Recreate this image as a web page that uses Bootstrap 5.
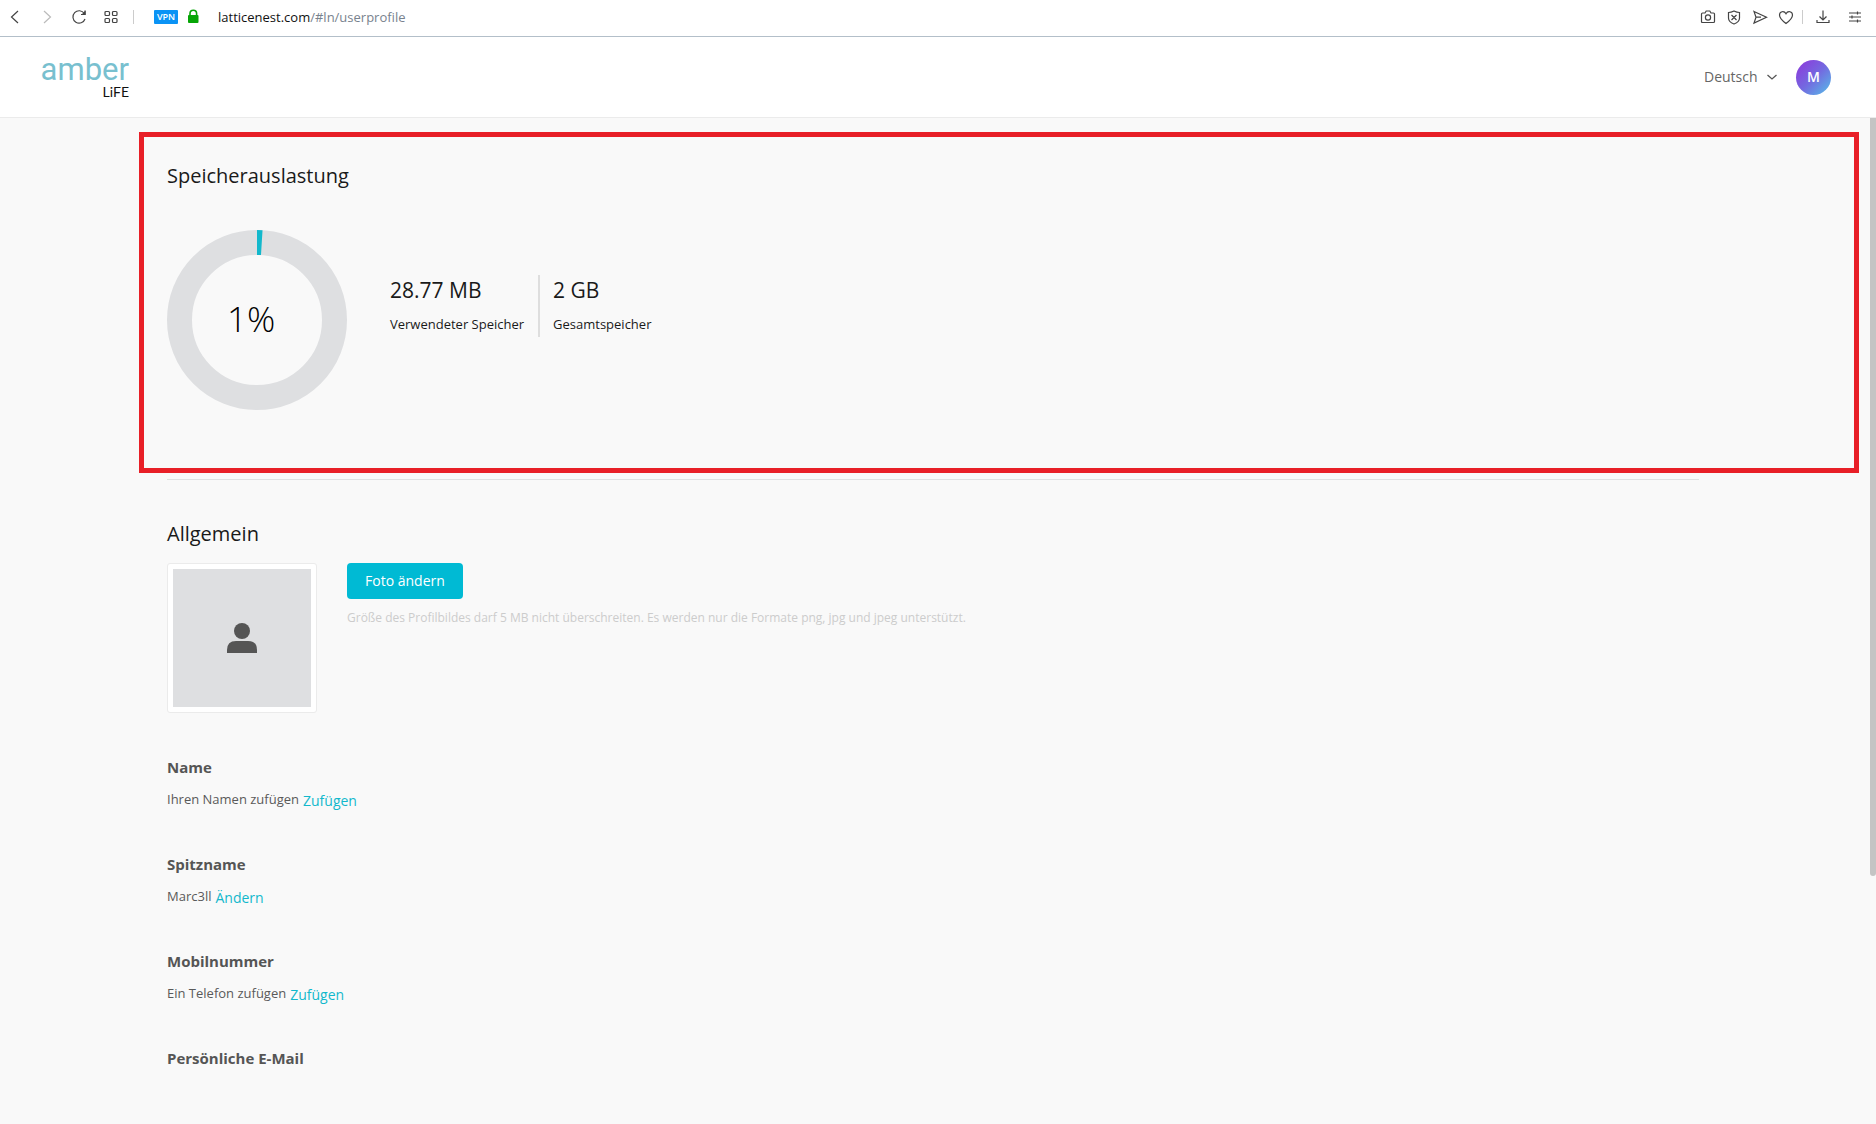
<!DOCTYPE html>
<html lang="de">
<head>
<meta charset="utf-8">
<meta name="viewport" content="width=device-width, initial-scale=1">
<title>amber LiFE – Profil</title>
<link href="https://cdn.jsdelivr.net/npm/bootstrap@5.3.0/dist/css/bootstrap.min.css" rel="stylesheet">
<style>
  body { font-family: "Open Sans", "Noto Sans", sans-serif; font-size: 13px; line-height: 20px; color: #5a5a5a; background: #f9f9f9; }
  .browser-bar { height: 37px; padding: 0 13px 6px 7px; border-bottom: 1px solid #b3bfc9; }
  .tool { border: 0; padding: 0; background: none; color: #444; display: flex; }
  .tool:disabled { color: #bbb; }
  .tool svg { width: 16px; height: 16px; fill: none; stroke: currentColor; stroke-width: 1.2; }
  .nav-tools { gap: 16px; }
  .side-tools { gap: 10px; }
  .bar-rule { width: 1px; height: 14px; background: #ccc; }
  .bar-rule-wide { margin: 0 20px 0 14px; }
  .vpn { background: #0a93f5; color: #fff; font-size: 9px; line-height: 14px; width: 24px; border-radius: 1px; }
  .address { font-size: 13px; color: #78828e; padding-left: 17px; }
  .address span { color: #111; }
  .site-head { height: 81px; padding: 0 45px 0 41px; border-bottom: 1px solid #ebebeb; }
  .brand { width: 88px; padding-top: 2px; color: #78c0cf; }
  .brand-name { font-family: Roboto, sans-serif; font-size: 31px; line-height: 28px; }
  .brand-sub { font-family: Lato, sans-serif; font-size: 14px; line-height: 16px; color: #111; }
  .lang { margin-right: 18px; }
  .lang select { appearance: none; border: 0; padding: 0; background: none; color: #666; font-size: 14px; }
  .user-dot { width: 35px; height: 35px; border: 0; border-radius: 50%; color: #fff; font-size: 14px; font-weight: 600; background: linear-gradient(135deg, #8a3fdc 10%, #7468e0 50%, #55c0e8 100%); }
  .page { padding: 14px 17px 0 139px; }
  .usage { border: 5px solid #e81f27; padding: 24px 23px 58px; color: #1a1a1a; }
  .heading { font-size: 20px; line-height: 30px; font-weight: 400; color: #1a1a1a; margin: 0; }
  .donut { width: 180px; height: 180px; }
  .donut-row { margin-top: 39px; }
  .donut-label { left: 60px; top: 66px; font-size: 35px; line-height: 46px; font-weight: 300; color: #000; }
  .stats { margin: 45px 0 0 43px; height: 62px; }
  .stats > div + div { border-left: 2px solid #dedede; padding-left: 13px; margin-left: 14px; }
  .stat-value { font-size: 21px; line-height: 30px; margin-bottom: 9px; }
  .general { padding: 6px 160px 0 28px; }
  .split { border: 0; border-top: 1px solid #e0e0e0; opacity: 1; margin: 0 0 39px; }
  .photo-frame { width: 150px; height: 150px; padding: 5px; background: #fff; border: 1px solid #ebebeb; border-radius: 3px; }
  .photo-frame div { background: #dedfe1; }
  .photo-row { gap: 30px; margin-top: 14px; }
  .btn-photo { --bs-btn-color: #fff; --bs-btn-bg: #00bad4; --bs-btn-hover-bg: #00a5bd; --bs-btn-hover-color: #fff; --bs-btn-font-size: 14px; --bs-btn-font-weight: 500; --bs-btn-padding-x: 17px; --bs-btn-padding-y: 7px; --bs-btn-border-radius: 4px; --bs-btn-line-height: 20px; }
  .hint { font-size: 12px; color: #ccc; margin: 9px 0 0; }
  .field { margin-bottom: 41px; }
  .field h3 { font-size: 15px; line-height: 20px; font-weight: 700; margin: 0 0 12px; color: #555; }
  .field a { font-size: 14px; line-height: 24px; color: #12b8cc; text-decoration: none; }
  .fields { margin-top: 44px; }
  .scroll-thumb { right: 0; top: 118px; width: 6px; height: 758px; background: #c4c4c4; border-radius: 0 0 3px 3px; }
</style>
<script src="https://cdn.jsdelivr.net/npm/bootstrap@5.3.0/dist/js/bootstrap.bundle.min.js"></script>
</head>
<body class="vh-100 overflow-hidden position-relative">
<div class="browser-bar bg-white d-flex align-items-center pt-1">
  <div class="nav-tools d-flex">
    <button class="tool" aria-label="Zurück"><svg viewBox="0 0 16 16"><path d="M11 2 4.500 8l6.500 6"/></svg></button>
    <button class="tool" disabled aria-label="Vor"><svg viewBox="0 0 16 16"><path d="m5 2 6.500 6L5 14"/></svg></button>
    <button class="tool" aria-label="Neu laden"><svg viewBox="0 0 16 16"><path d="M13.300 4.500A6.200 6.200 0 1 0 14 10M14 1.500v4h-4"/><path d="M14 3v2.500h-2.500z" fill="currentColor"/></svg></button>
    <button class="tool" aria-label="Schnellwahl"><svg viewBox="0 0 16 16"><rect x="2" y="2.500" width="4.500" height="4" rx="1"/><rect x="9.500" y="2.500" width="4.500" height="4" rx="1"/><rect x="2" y="9.500" width="4.500" height="4" rx="1"/><rect x="9.500" y="9.500" width="4.500" height="4" rx="1"/></svg></button>
  </div>
  <span class="bar-rule bar-rule-wide"></span>
  <span class="vpn text-center fw-semibold">VPN</span>
  <svg class="ms-2" width="15" height="16" viewBox="0 0 15 16" aria-hidden="true"><path d="M4 7V4.500a3.300 3.300 0 0 1 6.600 0V7" fill="none" stroke="#06a506" stroke-width="1.600"/><rect x="2" y="6" width="10.500" height="8" rx="1" fill="#06a506"/></svg>
  <div class="address"><span>latticenest.com</span>/#ln/userprofile</div>
  <div class="side-tools d-flex align-items-center ms-auto">
    <button class="tool" aria-label="Schnappschuss"><svg viewBox="0 0 16 16"><path d="M2.500 4H5l1.200-2h3.600L11 4h2.500q1 0 1 1v7.500q0 1-1 1h-11q-1 0-1-1V5q0-1 1-1z"/><circle cx="8" cy="8.500" r="2.600"/></svg></button>
    <button class="tool" aria-label="Werbeblocker"><svg viewBox="0 0 16 16"><path d="M8 2q3 1.500 5.500 1.500V9q0 4-5.500 6-5.500-2-5.500-6V3.500Q5 3.500 8 2zM5.500 6l5 5m0-5-5 5"/></svg></button>
    <button class="tool" aria-label="Senden"><svg viewBox="0 0 16 16"><path d="m2 2.500 12.500 5.700L2 14l2-5.800zM4 8.200h5"/></svg></button>
    <button class="tool" aria-label="Favorit"><svg viewBox="0 0 16 16"><path d="M8 14.500C4 11.500 1.500 9 1.500 6 1.500 2.500 6 1.300 8 4.700 10 1.300 14.500 2.500 14.500 6c0 3-2.500 5.500-6.500 8.500z"/></svg></button>
  </div>
  <span class="bar-rule mx-2"></span>
  <div class="nav-tools d-flex ms-1">
    <button class="tool" aria-label="Downloads"><svg viewBox="0 0 16 16"><path d="M8 1.500V11M4.500 7.500 8 11l3.500-3.500M2 11v2.500h12V11"/></svg></button>
    <button class="tool" aria-label="Einstellungen"><svg viewBox="0 0 16 16"><path d="M2 4h12M2 8h12M2 12h12M10.500 2.500v3M5 6.500v3M10.500 10.500v3"/></svg></button>
  </div>
</div>

<header class="site-head bg-white d-flex align-items-center justify-content-between">
  <a class="brand text-decoration-none d-flex flex-column align-items-end" href="#"><span class="brand-name">amber</span><span class="brand-sub">LiFE</span></a>
  <div class="d-flex align-items-center">
    <label class="lang d-flex align-items-center gap-2"><select aria-label="Sprache"><option>Deutsch</option></select>
      <svg width="12" height="12" viewBox="0 0 12 12" fill="none" stroke="#555" stroke-width="1.300" aria-hidden="true"><path d="m1.500 4 4.500 4 4.500-4"/></svg></label>
    <button class="user-dot p-0">M</button>
  </div>
</header>

<main class="page">
  <section class="usage">
    <h2 class="heading">Speicherauslastung</h2>
    <div class="donut-row d-flex">
      <div class="donut position-relative">
        <svg class="d-block" width="180" height="180" viewBox="0 0 180 180" fill="none" stroke-width="25" aria-hidden="true"><circle cx="90" cy="90" r="77.500" stroke="#dedfe1"/><circle cx="90" cy="90" r="77.500" stroke="#12b8cc" pathLength="1000" stroke-dasharray="10 990" transform="rotate(-90 90 90)"/></svg>
        <span class="donut-label position-absolute">1%</span>
      </div>
      <div class="stats d-flex">
        <div><div class="stat-value">28.77 MB</div><div>Verwendeter Speicher</div></div>
        <div><div class="stat-value">2 GB</div><div>Gesamtspeicher</div></div>
      </div>
    </div>
  </section>

  <section class="general">
    <hr class="split">
    <h2 class="heading">Allgemein</h2>
    <div class="photo-row d-flex">
      <div class="photo-frame"><div class="h-100 d-flex align-items-center justify-content-center"><svg width="30" height="30" viewBox="0 0 30 30" fill="#555" aria-hidden="true"><circle cx="15" cy="8" r="8"/><path d="M0 30v-3q0-9 9-9h12q9 0 9 9v3z"/></svg></div></div>
      <div>
        <button class="btn btn-photo">Foto ändern</button>
        <p class="hint">Größe des Profilbildes darf 5 MB nicht überschreiten. Es werden nur die Formate png, jpg und jpeg unterstützt.</p>
      </div>
    </div>
    <div class="fields">
      <div class="field"><h3>Name</h3><div class="d-flex gap-1"><span>Ihren Namen zufügen</span><a href="#">Zufügen</a></div></div>
      <div class="field"><h3>Spitzname</h3><div class="d-flex gap-1"><span>Marc3ll</span><a href="#">Ändern</a></div></div>
      <div class="field"><h3>Mobilnummer</h3><div class="d-flex gap-1"><span>Ein Telefon zufügen</span><a href="#">Zufügen</a></div></div>
      <div class="field"><h3>Persönliche E-Mail</h3></div>
    </div>
  </section>
</main>
<div class="scroll-thumb position-absolute"></div>
</body>
</html>
